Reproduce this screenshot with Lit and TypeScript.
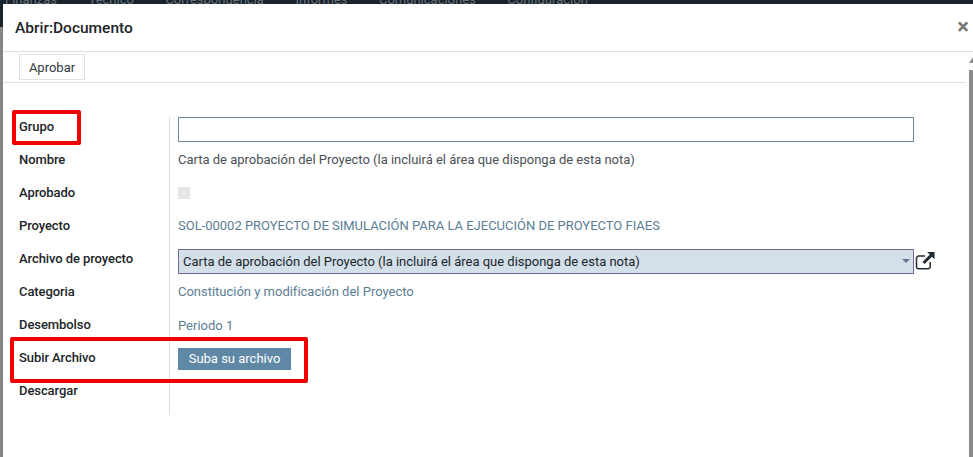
import { LitElement, html, css, svg } from 'lit';
import { customElement } from 'lit/decorators.js';

const NAV = ['Finanzas', 'Técnico', 'Correspondencia', 'Informes', 'Comunicaciones', 'Configuración'];

const externalIcon = svg`<svg class="ext" viewBox="0 0 20 20" width="20" height="20" aria-hidden="true">
  <path d="M15.2 11v4.4a2.3 2.3 0 0 1-2.3 2.3H3.8a2.3 2.3 0 0 1-2.3-2.3V7.3A2.3 2.3 0 0 1 3.8 5H10" fill="none" stroke="#212b33" stroke-width="1.5"/>
  <path d="M12.2 1H19.5V8.3L16.9 5.7L9.6 13L7.5 10.9L14.8 3.6Z" fill="#212b33"/>
</svg>`;

@customElement('app-root')
export class AppRoot extends LitElement {
  static override styles = css`
    :host {
      display: block;
      position: relative;
      width: 973px;
      height: 457px;
      overflow: hidden;
      background: #858585;
      font-family: Roboto, 'Liberation Sans', sans-serif;
      font-size: 13px;
      color: #212529;
    }
    .nav {
      display: flex;
      gap: 31.5px;
      height: 27px;
      padding-left: 5px;
      background: #18232d;
      color: #67727b;
      line-height: 8px;
      overflow: hidden;
    }
    .nav span {
      margin-top: -4px;
    }
    .modal {
      position: absolute;
      left: 3px;
      top: 4px;
      width: 970px;
      height: 453px;
      background: #fff;
    }
    .header {
      display: flex;
      align-items: center;
      justify-content: space-between;
      height: 47px;
      padding: 0 4px 0 12px;
      border-bottom: 1px solid #dee2e6;
    }
    .title {
      font-size: 15.5px;
      font-weight: 500;
      color: #212529;
    }
    .close {
      font-size: 22px;
      font-weight: 700;
      color: #777;
      line-height: 1;
      margin-top: -1px;
    }
    .toolbar {
      height: 31px;
      margin-right: 7px;
      padding: 2px 0 0 16px;
      box-sizing: border-box;
      border-bottom: 1px solid #dee2e6;
    }
    .toolbar button {
      display: block;
      width: 66px;
      height: 26px;
      padding: 0;
      border: 1px solid #dee2e6;
      background: #fff;
      font: inherit;
      color: #343a40;
    }
    .sheet {
      display: grid;
      grid-template-columns: 151px 1fr;
      margin: 34px 0 0 16px;
      width: 896px;
    }
    .labels {
      border-right: 1px solid #d9dcdf;
      height: 298px;
    }
    .label {
      height: 33px;
      line-height: 20px;
      font-weight: 500;
      letter-spacing: -0.08px;
      color: #212529;
      white-space: nowrap;
    }
    .values {
      padding-left: 8px;
    }
    .value {
      display: flex;
      align-items: flex-start;
      height: 33px;
      line-height: 20px;
      letter-spacing: -0.01px;
      color: #5b7d93;
      white-space: nowrap;
    }
    .value.dark {
      color: #495057;
    }
    .value.low {
      line-height: 22px;
    }
    .text-input {
      width: 736px;
      height: 25px;
      box-sizing: border-box;
      border: 1px solid #6a8a9c;
      background: #fff;
    }
    .check {
      width: 12px;
      height: 12px;
      margin-top: 4px;
      background: #e6e7e9;
    }
    .select {
      position: relative;
      width: 736px;
      height: 25px;
      box-sizing: border-box;
      border: 1px solid #6f6a94;
      background: #d3dfe9;
      padding-left: 4px;
      line-height: 23px;
      color: #212529;
    }
    .select::after {
      content: '';
      position: absolute;
      right: 3px;
      top: 9px;
      border-left: 4px solid transparent;
      border-right: 4px solid transparent;
      border-top: 4px solid #6f6f96;
    }
    .ext {
      margin: 2px 0 0 1px;
    }
    .upload {
      width: 113px;
      height: 22px;
      padding: 0;
      border: none;
      background: #5e88a5;
      color: #fff;
      font: inherit;
    }
    .scroll-arrow {
      position: absolute;
      right: 0;
      top: 57px;
      border-left: 4px solid transparent;
      border-bottom: 6px solid #8c8c8c;
    }
    .scroll-bar {
      position: absolute;
      right: 0;
      top: 70px;
      width: 4px;
      bottom: 0;
      background: #8c8c8c;
    }
    .mark {
      position: absolute;
      box-sizing: border-box;
      border: 4px solid #f00000;
      border-radius: 2px;
    }
    .mark.group {
      left: 12px;
      top: 110px;
      width: 69px;
      height: 35px;
    }
    .mark.upload-mark {
      left: 10px;
      top: 337px;
      width: 298px;
      height: 46px;
    }
  `;

  override render() {
    return html`
      <div class="nav">${NAV.map((item) => html`<span>${item}</span>`)}</div>
      <div class="modal">
        <div class="header">
          <span class="title">Abrir:Documento</span>
          <span class="close">×</span>
        </div>
        <div class="toolbar"><button>Aprobar</button></div>
        <div class="sheet">
          <div class="labels">
            <div class="label">Grupo</div>
            <div class="label">Nombre</div>
            <div class="label">Aprobado</div>
            <div class="label">Proyecto</div>
            <div class="label">Archivo de proyecto</div>
            <div class="label">Categoria</div>
            <div class="label">Desembolso</div>
            <div class="label">Subir Archivo</div>
            <div class="label">Descargar</div>
          </div>
          <div class="values">
            <div class="value"><div class="text-input"></div></div>
            <div class="value dark">Carta de aprobación del Proyecto (la incluirá el área que disponga de esta nota)</div>
            <div class="value"><div class="check"></div></div>
            <div class="value">SOL-00002 PROYECTO DE SIMULACIÓN PARA LA EJECUCIÓN DE PROYECTO FIAES</div>
            <div class="value">
              <div class="select">Carta de aprobación del Proyecto (la incluirá el área que disponga de esta nota)</div>
              ${externalIcon}
            </div>
            <div class="value">Constitución y modificación del Proyecto</div>
            <div class="value low">Periodo 1</div>
            <div class="value"><button class="upload">Suba su archivo</button></div>
            <div class="value"></div>
          </div>
        </div>
      </div>
      <div class="scroll-arrow"></div>
      <div class="scroll-bar"></div>
      <div class="mark group"></div>
      <div class="mark upload-mark"></div>
    `;
  }
}
